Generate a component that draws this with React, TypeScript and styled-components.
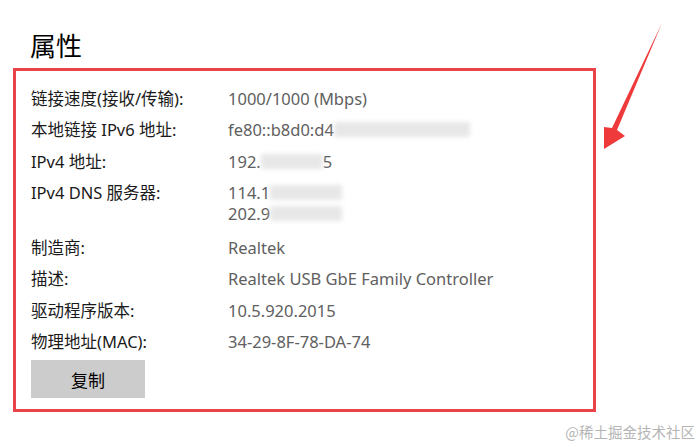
import React from "react";
import styled, { createGlobalStyle } from "styled-components";

const Global = createGlobalStyle`
  html, body { margin: 0; padding: 0; background: #ffffff; }
  body { width: 700px; height: 447px; overflow: hidden; }
`;

const Page = styled.div`
  position: relative;
  width: 700px;
  height: 447px;
  box-sizing: border-box;
  padding: 29px 0 0 13px;
  font-family: "Noto Sans", "Noto Sans CJK SC", sans-serif;
`;

const Title = styled.h1`
  margin: 0 0 7px 17px;
  font-size: 26px;
  line-height: 32px;
  font-weight: 400;
  color: #000;
  font-family: "Noto Sans CJK SC", sans-serif;
`;

const Box = styled.section`
  width: 583px;
  height: 344px;
  box-sizing: border-box;
  border: 3px solid #e8434b;
  padding: 17px 15px 0 15px;
`;

const Grid = styled.dl`
  margin: 0;
  display: grid;
  grid-template-columns: 197px 1fr;
  row-gap: 10.3px;
  line-height: 21px;
`;

const Label = styled.dt`
  margin: 0;
  font-size: 16.5px;
  color: #1a1a1a;
  white-space: nowrap;
  font-family: "Noto Sans", "Noto Sans CJK SC", sans-serif;
`;

const Value = styled.dd<{ $extra?: number }>`
  margin: 0 0 ${(p) => p.$extra ?? 0}px 0;
  font-size: 16.5px;
  color: #606060;
  display: flex;
  flex-direction: column;
`;

const Line = styled.span`
  display: flex;
  align-items: center;
  white-space: nowrap;
`;

const Blur = styled.span<{ $w: number }>`
  display: inline-block;
  width: ${(p) => p.$w}px;
  height: 15px;
  background: #e2e2e2;
  filter: blur(2px);
  opacity: 0.8;
`;

const CopyButton = styled.button`
  margin-top: 8px;
  width: 114px;
  height: 38px;
  border: none;
  background: #cccccc;
  color: #000;
  font-size: 17px;
  font-family: "Noto Sans CJK SC", sans-serif;
  padding: 0;
`;

const Watermark = styled.div`
  position: absolute;
  right: 5px;
  bottom: 5px;
  font-size: 14.5px;
  color: #b5b5b5;
  font-family: "Noto Sans CJK SC", sans-serif;
`;

const Arrow = styled.svg`
  position: absolute;
  left: 0;
  top: 0;
  pointer-events: none;
`;

export default function App() {
  return (
    <Page>
      <Global />
      <Title>属性</Title>
      <Box>
        <Grid>
          <Label>链接速度(接收/传输):</Label>
          <Value>1000/1000 (Mbps)</Value>
          <Label>本地链接 IPv6 地址:</Label>
          <Value>
            <Line>
              fe80::b8d0:d4<Blur $w={136} />
            </Line>
          </Value>
          <Label>IPv4 地址:</Label>
          <Value>
            <Line>
              192.<Blur $w={62} />5
            </Line>
          </Value>
          <Label>IPv4 DNS 服务器:</Label>
          <Value $extra={3}>
            <Line>
              114.1<Blur $w={72} />
            </Line>
            <Line>
              202.9<Blur $w={72} />
            </Line>
          </Value>
          <Label>制造商:</Label>
          <Value>Realtek</Value>
          <Label>描述:</Label>
          <Value>Realtek USB GbE Family Controller</Value>
          <Label>驱动程序版本:</Label>
          <Value>10.5.920.2015</Value>
          <Label>物理地址(MAC):</Label>
          <Value>34-29-8F-78-DA-74</Value>
        </Grid>
        <CopyButton>复制</CopyButton>
      </Box>
      <Arrow width="700" height="447" viewBox="0 0 700 447">
        <polygon
          points="662,23 617,130 625,136 604,149 604,127 612,128"
          fill="#ee3a3a"
        />
      </Arrow>
      <Watermark>@稀土掘金技术社区</Watermark>
    </Page>
  );
}
